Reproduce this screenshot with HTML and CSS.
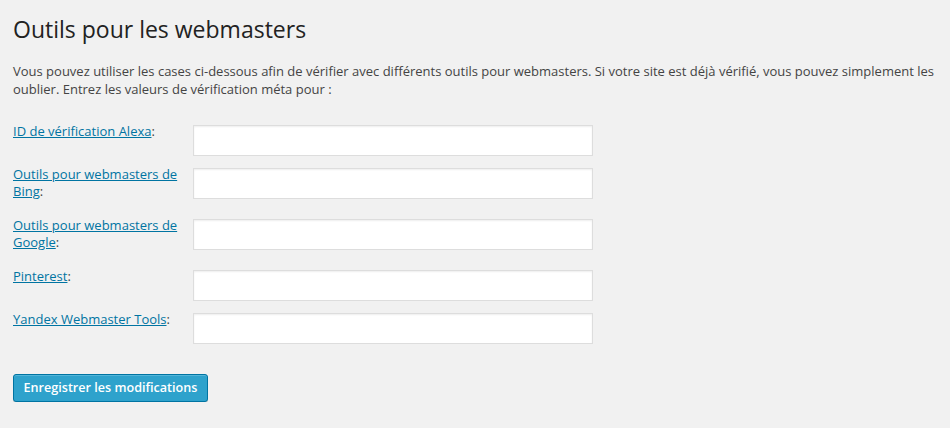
FILE: index.html
```html
<!DOCTYPE html>
<html lang="fr">
<head>
<meta charset="utf-8">
<title>Outils pour les webmasters</title>
<link rel="stylesheet" href="styles.css">
</head>
<body>
<div class="wrap">
  <h2 class="title">Outils pour les webmasters</h2>
  <p class="intro">Vous pouvez utiliser les cases ci-dessous afin de vérifier avec différents outils pour webmasters. Si votre site est déjà vérifié, vous pouvez simplement les oublier. Entrez les valeurs de vérification méta pour :</p>
  <form class="tools">
    <div class="row">
      <label class="label" for="alexa"><a href="#">ID de vérification Alexa</a>:</label>
      <input class="field" id="alexa" type="text">
    </div>
    <div class="row">
      <label class="label" for="bing"><a href="#">Outils pour webmasters de Bing</a>:</label>
      <input class="field" id="bing" type="text">
    </div>
    <div class="row">
      <label class="label" for="google"><a href="#">Outils pour webmasters de Google</a>:</label>
      <input class="field" id="google" type="text">
    </div>
    <div class="row">
      <label class="label" for="pinterest"><a href="#">Pinterest</a>:</label>
      <input class="field" id="pinterest" type="text">
    </div>
    <div class="row">
      <label class="label" for="yandex"><a href="#">Yandex Webmaster Tools</a>:</label>
      <input class="field" id="yandex" type="text">
    </div>
    <div class="actions">
      <button class="button-primary" type="button">Enregistrer les modifications</button>
    </div>
  </form>
</div>
</body>
</html>
```

FILE: styles.css
```css
html, body {
  margin: 0;
  padding: 0;
  background: #f1f1f1;
}

body {
  font-family: "Open Sans", "Liberation Sans", sans-serif;
  font-size: 13px;
  color: #444;
}

.wrap {
  padding: 15px 12px 0 13px;
}

.title {
  margin: 0;
  font-size: 23px;
  font-weight: 400;
  line-height: 29px;
  color: #222;
}

.intro {
  margin: 18px 0 25px;
  line-height: 18px;
}

.tools {
  margin: 0;
}

.row {
  display: grid;
  grid-template-columns: 180px 400px;
  align-items: start;
  margin-bottom: 10px;
}

.label {
  line-height: 17px;
  padding-bottom: 7px;
  padding-right: 12px;
}

.label a {
  color: #0074a2;
  text-decoration: underline;
}

.field {
  box-sizing: border-box;
  width: 400px;
  height: 31px;
  margin: 2px 0 0;
  padding: 3px 5px;
  border: 1px solid #ddd;
  background: #fff;
  box-shadow: inset 0 1px 2px rgba(0, 0, 0, 0.07);
  font-family: inherit;
  font-size: 14px;
  outline: none;
}

.actions {
  padding-top: 20px;
}

.button-primary {
  box-sizing: border-box;
  width: 195px;
  height: 28px;
  padding: 0 0 1px;
  border: 1px solid #0074a2;
  border-radius: 3px;
  background: #2ea2cc;
  color: #fff;
  font-family: inherit;
  font-size: 12.6px;
  font-weight: 600;
  line-height: 26px;
  text-align: center;
  box-shadow: inset 0 1px 0 rgba(120, 200, 230, 0.5), 0 1px 0 rgba(0, 0, 0, 0.15);
  cursor: pointer;
}
```
